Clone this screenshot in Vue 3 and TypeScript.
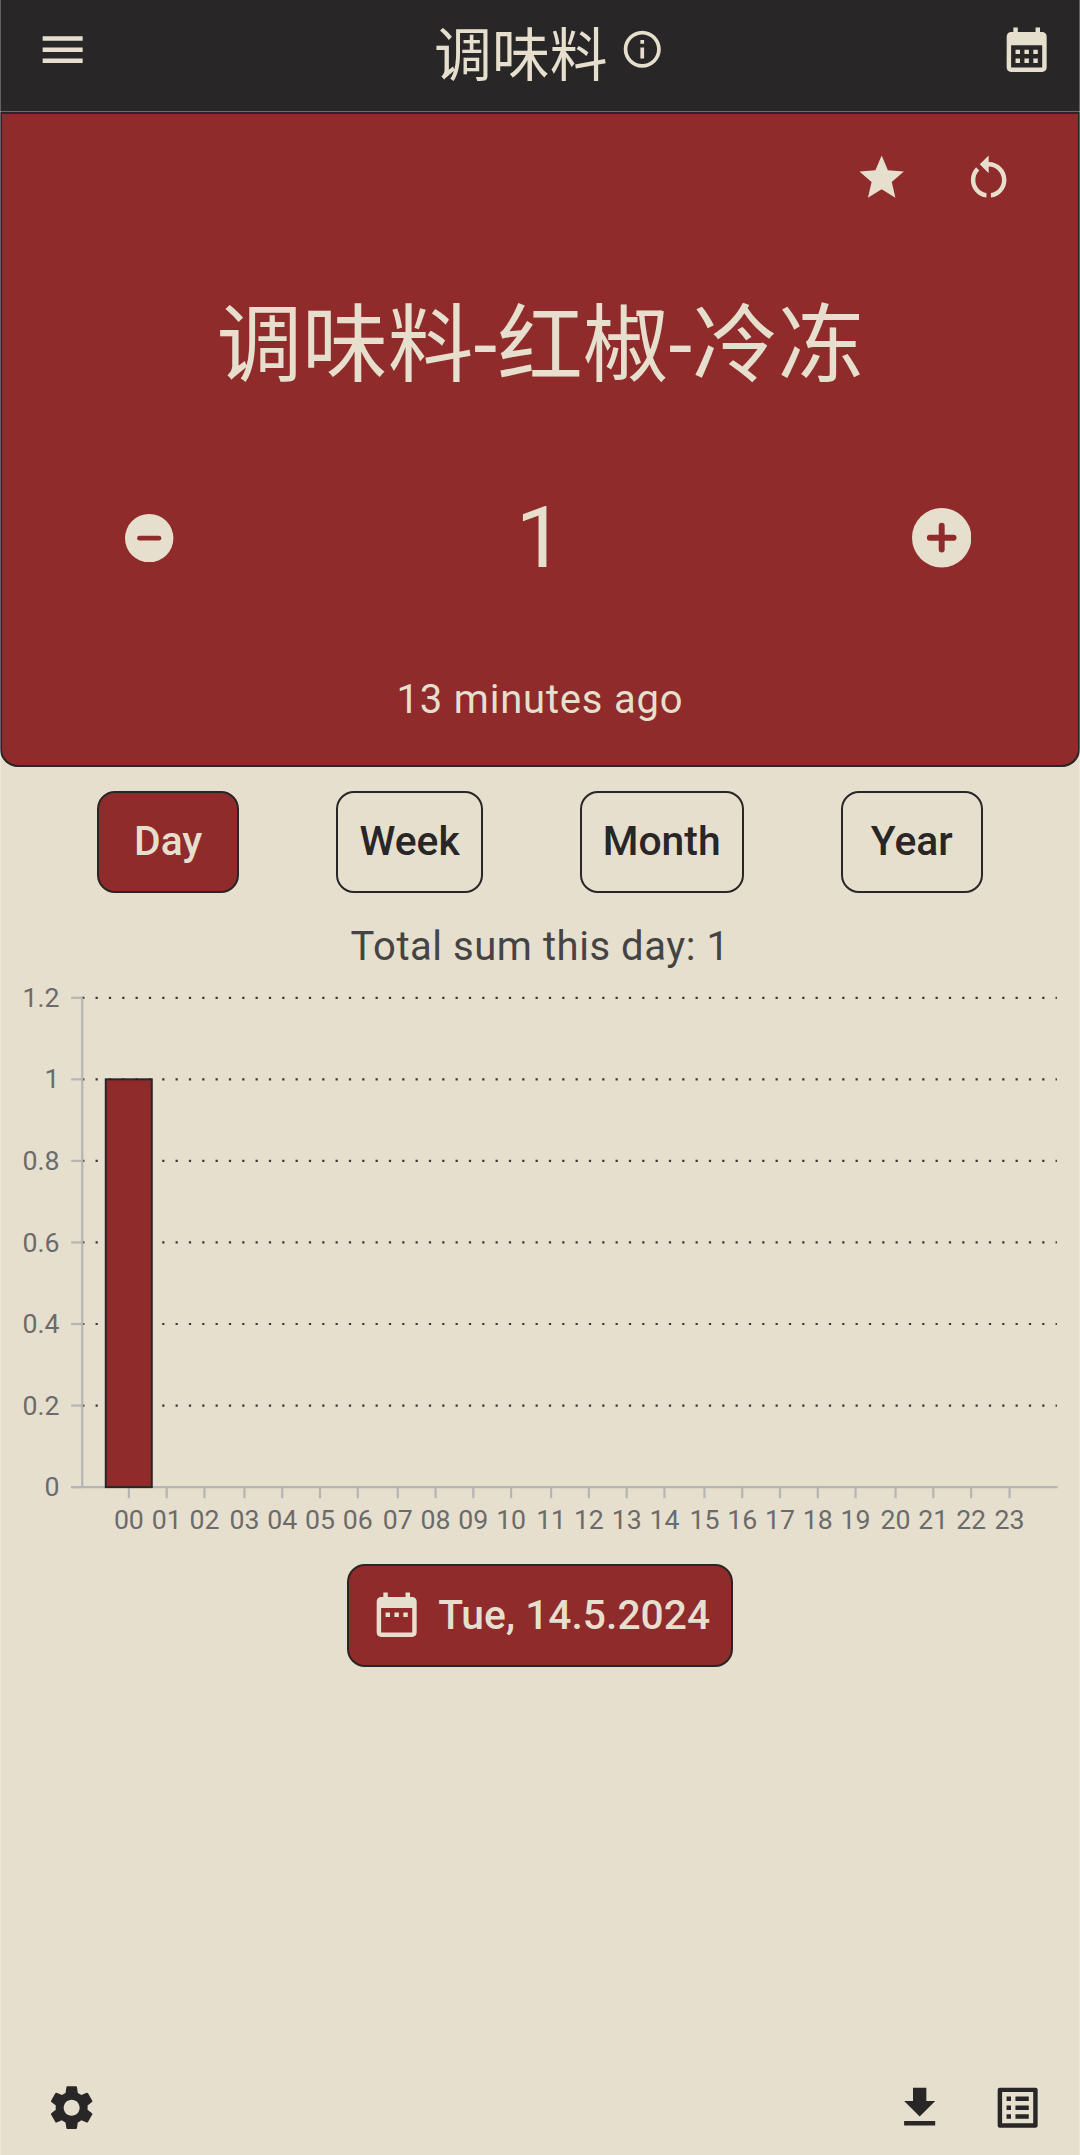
<script setup lang="ts">
import { ref } from 'vue'

const ranges = ['Day', 'Week', 'Month', 'Year']
const active = ref('Day')

interface Tick {
  label: string
  pos: number
}

const yStep = 36.7
const yTop = 8
const baseY = yTop + yStep * 6
const yTicks: Tick[] = ['1.2', '1', '0.8', '0.6', '0.4', '0.2', '0'].map((label, i) => ({
  label,
  pos: yTop + i * yStep,
}))

const hourX = [
  58, 75, 92, 110, 127, 144, 161, 179, 196, 213, 230, 248, 265, 282, 299, 317, 334, 351, 368, 385,
  403, 420, 437, 454.3,
]
const xTicks: Tick[] = hourX.map((pos, i) => ({ label: String(i).padStart(2, '0'), pos }))
</script>

<template>
  <div class="app">
    <header class="bar">
      <svg class="icon" viewBox="0 0 24 24"><path d="M3 18h18v-2H3v2zm0-5h18v-2H3v2zm0-7v2h18V6H3z" /></svg>
      <div class="title">
        <span>调味料</span>
        <svg class="info" viewBox="0 0 24 24">
          <path d="M11 7h2v2h-2zm0 4h2v6h-2zm1-9C6.48 2 2 6.48 2 12s4.48 10 10 10 10-4.48 10-10S17.52 2 12 2zm0 18c-4.41 0-8-3.59-8-8s3.59-8 8-8 8 3.59 8 8-3.59 8-8 8z" />
        </svg>
      </div>
      <svg class="icon" viewBox="0 0 24 24">
        <path d="M19 4h-1V2h-2v2H8V2H6v2H5c-1.11 0-1.99.9-1.99 2L3 20c0 1.1.89 2 2 2h14c1.1 0 2-.9 2-2V6c0-1.1-.9-2-2-2zm0 16H5V10h14v10zM9 14H7v-2h2v2zm4 0h-2v-2h2v2zm4 0h-2v-2h2v2zm-8 4H7v-2h2v2zm4 0h-2v-2h2v2zm4 0h-2v-2h2v2z" />
      </svg>
    </header>

    <section class="card">
      <div class="actions">
        <svg class="icon" viewBox="0 0 24 24"><path d="M12 17.27 18.18 21l-1.64-7.03L22 9.24l-7.19-.61L12 2 9.19 8.63 2 9.24l5.46 4.73L5.82 21z" /></svg>
        <svg class="icon" viewBox="0 0 24 24">
          <path d="M12 5V2L8 6l4 4V7c3.31 0 6 2.69 6 6 0 2.97-2.17 5.43-5 5.91v2.02c3.95-.49 7-3.85 7-7.93 0-4.42-3.58-8-8-8z" />
          <path d="M6 13c0-1.65.67-3.15 1.76-4.24L6.34 7.34C4.9 8.79 4 10.79 4 13c0 4.08 3.05 7.44 7 7.93v-2.02c-2.83-.48-5-2.94-5-5.91z" />
        </svg>
      </div>
      <h1 class="name">调味料-红椒-冷冻</h1>
      <div class="counter">
        <svg class="minus" viewBox="2 2 20 20">
          <circle cx="12" cy="12" r="10" />
          <path class="sign" d="M8 12h8" />
        </svg>
        <span class="count">1</span>
        <svg class="plus" viewBox="2 2 20 20">
          <circle cx="12" cy="12" r="10" />
          <path class="sign" d="M8 12h8M12 8v8" />
        </svg>
      </div>
      <p class="ago">13 minutes ago</p>
    </section>

    <nav class="ranges">
      <button v-for="r in ranges" :key="r" class="btn" :class="{ on: r === active }" @click="active = r">{{ r }}</button>
    </nav>

    <p class="sum">Total sum this day: 1</p>

    <svg class="chart" viewBox="0 0 486 252">
      <g class="grid">
        <line v-for="t in yTicks.slice(0, 6)" :key="t.label" x1="37" x2="475.6" :y1="t.pos" :y2="t.pos" />
      </g>
      <g class="axis">
        <line x1="37" x2="37" :y1="yTop" :y2="baseY" />
        <line x1="32" x2="475.9" :y1="baseY" :y2="baseY" />
        <line v-for="t in yTicks" :key="t.label" x1="32" x2="37" :y1="t.pos" :y2="t.pos" />
        <line v-for="t in xTicks" :key="t.label" :x1="t.pos" :x2="t.pos" :y1="baseY" :y2="baseY + 5" />
      </g>
      <rect class="column" x="47.6" :y="yTop + yStep" width="20.7" :height="yStep * 5" />
      <g class="labels">
        <text v-for="t in yTicks" :key="t.label" class="end" x="26.8" :y="t.pos + 4.1">{{ t.label }}</text>
        <text v-for="t in xTicks" :key="t.label" class="mid" :x="t.pos" :y="baseY + 19">{{ t.label }}</text>
      </g>
    </svg>

    <button class="btn on date">
      <svg class="icon" viewBox="0 0 24 24">
        <path d="M9 11H7v2h2v-2zm4 0h-2v2h2v-2zm4 0h-2v2h2v-2zm2-7h-1V2h-2v2H8V2H6v2H5c-1.11 0-1.99.9-1.99 2L3 20c0 1.1.89 2 2 2h14c1.1 0 2-.9 2-2V6c0-1.1-.9-2-2-2zm0 16H5V9h14v11z" />
      </svg>
      <span>Tue, 14.5.2024</span>
    </button>

    <footer class="foot">
      <svg class="icon" viewBox="0 0 24 24">
        <path d="M19.14 12.94c.04-.3.06-.61.06-.94 0-.32-.02-.64-.07-.94l2.03-1.58c.18-.14.23-.41.12-.61l-1.92-3.32c-.12-.22-.37-.29-.59-.22l-2.39.96c-.5-.38-1.03-.7-1.62-.94l-.36-2.54c-.04-.24-.24-.41-.48-.41h-3.84c-.24 0-.43.17-.47.41l-.36 2.54c-.59.24-1.13.57-1.62.94l-2.39-.96c-.22-.08-.47 0-.59.22L2.74 8.87c-.12.21-.08.47.12.61l2.03 1.58c-.05.3-.09.63-.09.94s.02.64.07.94l-2.03 1.58c-.18.14-.23.41-.12.61l1.92 3.32c.12.22.37.29.59.22l2.39-.96c.5.38 1.03.7 1.62.94l.36 2.54c.05.24.24.41.48.41h3.84c.24 0 .44-.17.47-.41l.36-2.54c.59-.24 1.13-.56 1.62-.94l2.39.96c.22.08.47 0 .59-.22l1.92-3.32c.12-.22.07-.47-.12-.61l-2.01-1.58zM12 15.6c-1.98 0-3.6-1.62-3.6-3.6s1.62-3.6 3.6-3.6 3.6 1.62 3.6 3.6-1.62 3.6-3.6 3.6z" />
      </svg>
      <div class="tools">
        <svg class="icon" viewBox="0 0 24 24"><path d="M19 9h-4V3H9v6H5l7 7 7-7zM5 18v2h14v-2H5z" /></svg>
        <svg class="icon" viewBox="0 0 24 24">
          <path d="M19 5v14H5V5h14m1.1-2H3.9c-.5 0-.9.4-.9.9v16.2c0 .4.4.9.9.9h16.2c.4 0 .9-.5.9-.9V3.9c0-.5-.5-.9-.9-.9zM11 7h6v2h-6V7zm0 4h6v2h-6v-2zm0 4h6v2h-6zM7 7h2v2H7zm0 4h2v2H7zm0 4h2v2H7z" />
        </svg>
      </div>
    </footer>
  </div>
</template>

<style>
body {
  background: #e6dfcd;
}
</style>

<style scoped>
.app {
  --dark: #282627;
  --red: #8f2b2a;
  --sand: #e6dfcd;
  position: relative;
  box-sizing: border-box;
  width: 1080px;
  height: 2155px;
  display: flex;
  flex-direction: column;
  background: var(--sand);
  color: var(--dark);
  font-family: Roboto, 'Noto Sans CJK SC', sans-serif;
  font-size: 40px;
  overflow: hidden;
}
/* hairline down both screen edges */
.app::after {
  content: '';
  position: absolute;
  inset: 0;
  border: solid rgba(255, 255, 255, 0.28);
  border-width: 0 1px;
  pointer-events: none;
}
.icon {
  width: 53.33px;
  height: 53.33px;
  flex: none;
  fill: currentColor;
}
.bar {
  box-sizing: border-box;
  height: 112px;
  flex: none;
  display: flex;
  align-items: center;
  justify-content: space-between;
  padding: 0 27px 12.5px 35.6px;
  border-bottom: 1px solid #6f6b66;
  background: var(--dark);
  color: var(--sand);
}
.title {
  display: flex;
  align-items: center;
  margin-left: 9.5px;
  font-size: 57.8px;
  line-height: 80px;
}
.title span {
  padding-top: 13px;
}
.info {
  width: 44.5px;
  height: 44.5px;
  margin-left: 12px;
  fill: currentColor;
}
.card {
  box-sizing: border-box;
  height: 654.5px;
  flex: none;
  display: flex;
  flex-direction: column;
  padding-top: 36.5px;
  border: 2px solid var(--dark);
  border-radius: 0 0 18px 18px;
  background: var(--red);
  color: var(--sand);
}
.actions {
  display: flex;
  justify-content: flex-end;
  gap: 53.3px;
  padding-right: 63px;
}
.name {
  margin: 92px 0 0;
  font-size: 85.7px;
  font-weight: 400;
  line-height: 100px;
  text-align: center;
}
.counter {
  display: flex;
  align-items: center;
  justify-content: space-between;
  margin-top: 92px;
  padding: 0 106.5px 0 123.3px;
}
.count {
  font-size: 86px;
  line-height: 100px;
  margin-right: 6px;
}
.minus {
  width: 48.4px;
  height: 48.4px;
  fill: currentColor;
}
.plus {
  width: 59.4px;
  height: 59.4px;
  fill: currentColor;
}
.sign {
  stroke: var(--red);
  stroke-width: 2;
  stroke-linecap: round;
}
.ago {
  margin: 88.5px 0 0;
  line-height: 48px;
  text-align: center;
  letter-spacing: 0.8px;
}
.ranges {
  display: flex;
  justify-content: space-evenly;
  margin-top: 24.2px;
}
.btn {
  box-sizing: border-box;
  height: 102.8px;
  min-width: 142.2px;
  padding: 0 21px 1.4px;
  border: 2.2px solid var(--dark);
  border-radius: 18px;
  background: transparent;
  color: var(--dark);
  font-family: inherit;
  font-size: 40.8px;
  font-weight: 500;
  line-height: 48px;
}
.btn.on {
  background: var(--red);
  color: var(--sand);
}
.sum {
  margin: 29.3px 0 9.2px;
  color: #444;
  line-height: 48px;
  text-align: center;
  letter-spacing: 0.55px;
}
.chart {
  width: 1080px;
  height: 560px;
  flex: none;
}
.grid line {
  stroke: #3c3838;
  stroke-width: 1;
  stroke-dasharray: 1 5;
}
.axis line {
  stroke: #b5b5b3;
  stroke-width: 1;
}
.column {
  fill: var(--red);
  stroke: var(--dark);
  stroke-width: 0.9;
}
.labels {
  fill: #6b6b6b;
  font-size: 12px;
}
.end {
  text-anchor: end;
}
.mid {
  text-anchor: middle;
}
.date {
  align-self: center;
  flex: none;
  display: flex;
  align-items: center;
  gap: 15px;
  padding: 0 21px 1.4px;
  margin-top: 24.4px;
}
.foot {
  display: flex;
  justify-content: space-between;
  margin-top: auto;
  padding: 0 35.3px 21.1px 44.7px;
}
.tools {
  display: flex;
  gap: 45.2px;
}
</style>
